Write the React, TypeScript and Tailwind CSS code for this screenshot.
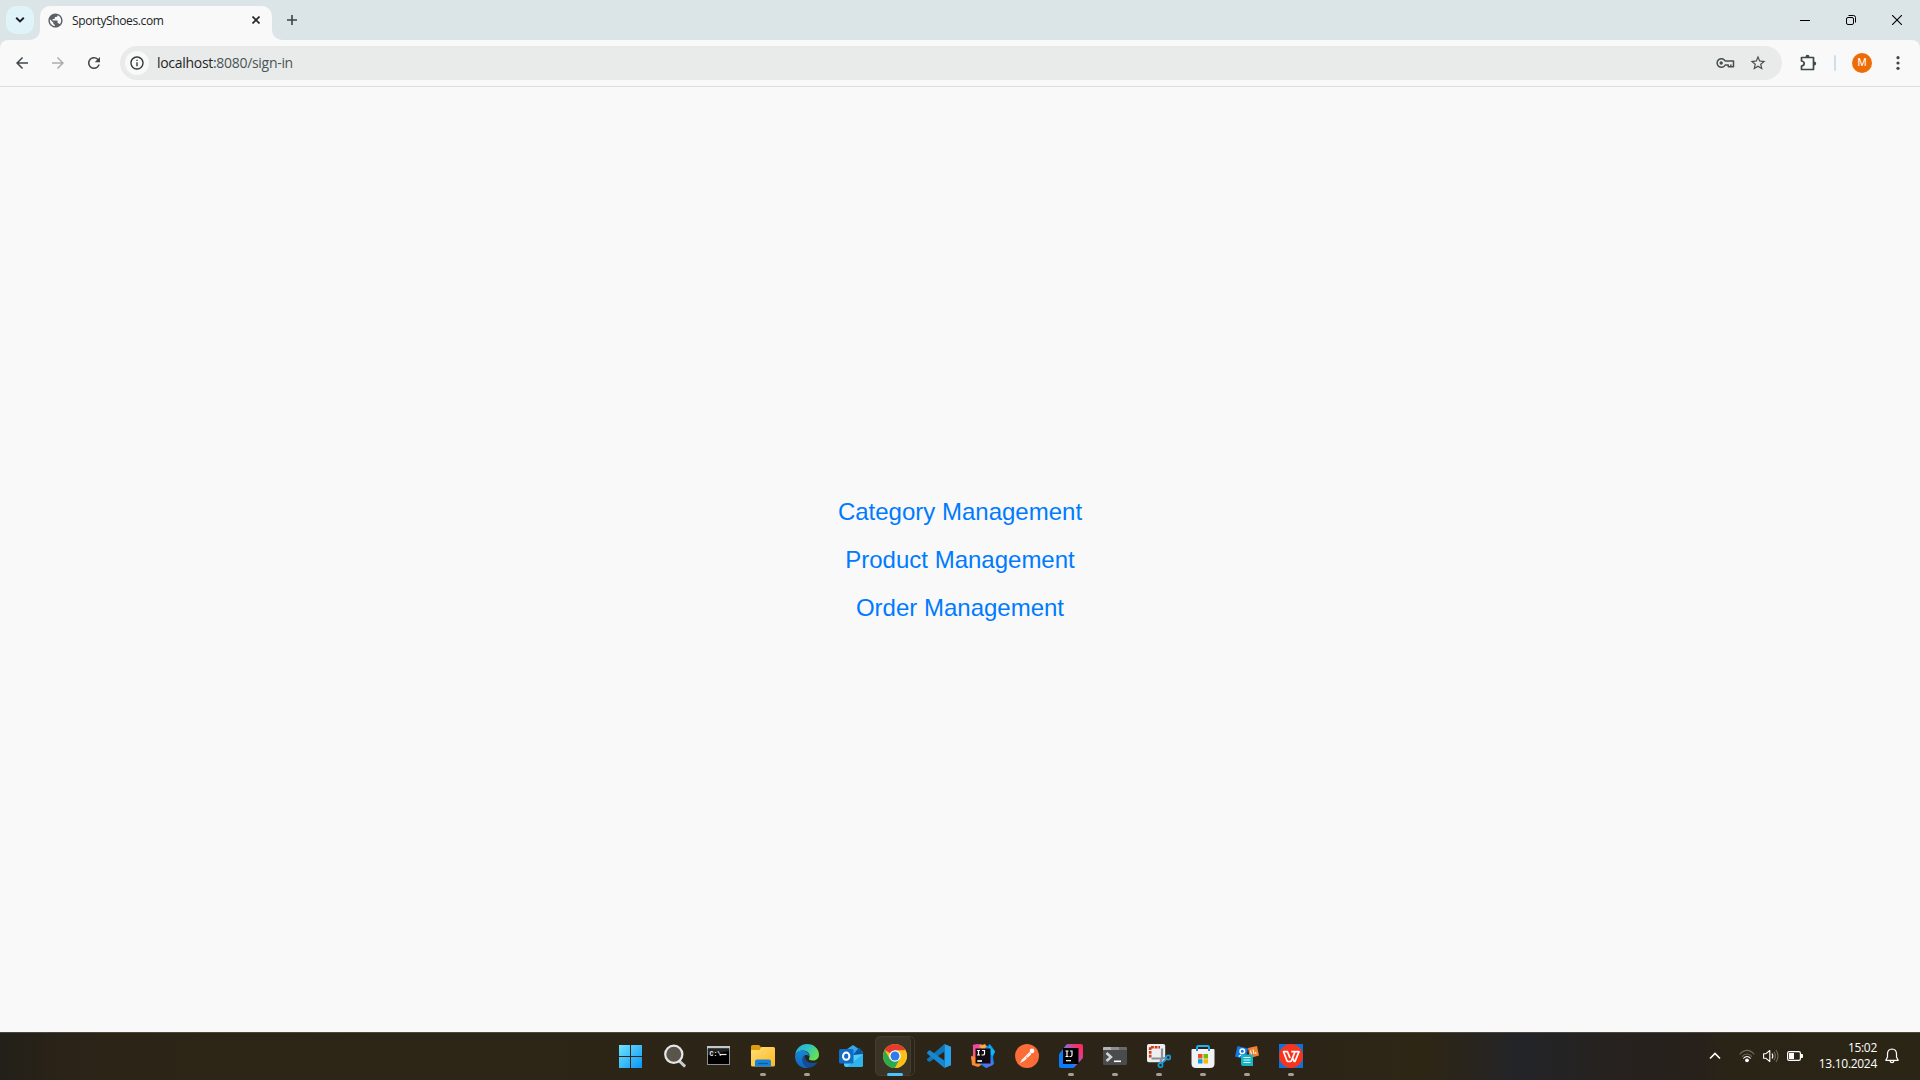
import React from "react";
import {
  MdArrowBack,
  MdArrowForward,
  MdRefresh,
  MdInfoOutline,
  MdStarBorder,
  MdPublic,
  MdKeyboardArrowDown,
} from "react-icons/md";

type Box = { children: React.ReactNode };

const Icon24 = ({ children }: Box) => (
  <svg width="24" height="24" viewBox="0 0 24 24">
    {children}
  </svg>
);

const StartIcon = () => (
  <Icon24>
    <defs>
      <linearGradient id="win" x1="0" y1="0" x2="24" y2="24" gradientUnits="userSpaceOnUse">
        <stop offset="0" stopColor="#6fe6fb" />
        <stop offset="1" stopColor="#0a92f5" />
      </linearGradient>
    </defs>
    <path d="M0 1H11V12H0zM12 1H23V12H12zM0 13H11V24H0zM12 13H23V24H12z" fill="url(#win)" />
  </Icon24>
);

const SearchIcon = () => (
  <Icon24>
    <path d="M16.800 17.500L21.200 21.700" stroke="#c8cccf" strokeWidth="3" strokeLinecap="round" />
    <circle cx="10.800" cy="10.300" r="8.600" fill="#59554a" stroke="#e4e6e8" strokeWidth="2.200" />
  </Icon24>
);

const CmdIcon = () => (
  <Icon24>
    <rect x=".5" y="2.500" width="22" height="18" fill="#000" stroke="#8c9096" />
    <rect x="0" y="2" width="23" height="2.500" fill="#c3c7cc" />
    <path d="M1 11 22 7V4.500H1z" fill="#222" />
    <text x="2.500" y="11.500" fontSize="6.500" fontWeight="700" fill="#eee" fontFamily="Liberation Mono, monospace">C:\</text>
    <path d="M13 10.500h6.500" stroke="#eee" strokeWidth="1.200" />
  </Icon24>
);

const ExplorerIcon = () => (
  <Icon24>
    <defs>
      <linearGradient id="fold" x1="0" y1="0" x2="1" y2="1">
        <stop offset="0" stopColor="#ffdd79" />
        <stop offset="1" stopColor="#fbb921" />
      </linearGradient>
    </defs>
    <path d="M0 2.500Q0 1 1.500 1H8L10.500 3.500H22Q23.500 3.500 24 5V8H0z" fill="#dd9c0b" />
    <path d="M0 6H8.500L10.500 3H22.500Q24 3 24 4.500V21Q24 22.500 22.500 22.500H1.500Q0 22.500 0 21z" fill="url(#fold)" />
    <path d="M4 22.500V17.500Q4 15.500 6 15.500H18Q20 15.500 20 17.500V22.500z" fill="#1683d8" />
    <path d="M7 19.500H17" stroke="#075ca9" strokeWidth="1.200" />
  </Icon24>
);

const EdgeIcon = () => (
  <Icon24>
    <defs>
      <linearGradient id="edgeTop" x1="0" y1="0" x2="1" y2=".5">
        <stop offset="0" stopColor="#2aa8e0" />
        <stop offset=".5" stopColor="#2cc3c8" />
        <stop offset="1" stopColor="#66df52" />
      </linearGradient>
      <linearGradient id="edgeLow" x1="0" y1="0" x2="0" y2="1">
        <stop offset="0" stopColor="#1788d5" />
        <stop offset="1" stopColor="#1065bf" />
      </linearGradient>
    </defs>
    <path d="M.3 10.500C1 4.500 6 0 12 0C19 0 24 5 24 10.500C24 14.500 21 16.500 18 16.500C15 16.500 13.500 15.500 14 14.500C15.500 12.500 14.500 7 9 6.500C5 6.200 1.500 8.500.3 10.500z" fill="url(#edgeTop)" />
    <path d="M.1 12C.3 8.500 4 6 8 6.500C12 7 14 9.500 14 12C11 9.500 7.500 12 7.500 15.500C7.500 19.500 10.500 23.300 14 23.800C6 25.500-.3 19 .1 12z" fill="url(#edgeLow)" />
    <path d="M10 11.300C7 13 7 17.500 9 20.500C11 23.500 14 24 15.500 23.500C19 22.500 21.500 20 22.500 18C18 20 13 19 11 16C9.800 14 9.500 12.500 10 11.300z" fill="#124d96" />
  </Icon24>
);

const OutlookIcon = () => (
  <Icon24>
    <path d="M4.500 7.500L14 1L23.500 7.500V12L14 18L4.500 12z" fill="#36a7e8" />
    <path d="M14 11L20 3.500L23.500 7.500V13L17 17z" fill="#0b57a4" />
    <path d="M5 12L24 10V20.500Q24 23 21.500 23H7.500Q5 23 5 20.500z" fill="#53cdf5" />
    <path d="M24 10L8 22.800Q8.300 23 10 23H21.500Q24 23 24 20.500z" fill="#2eb5ed" />
    <rect x="0" y="5" width="14.500" height="14.500" rx="1.500" fill="#0f6cc7" />
    <ellipse cx="7.200" cy="12.200" rx="3.200" ry="3.600" fill="none" stroke="#fff" strokeWidth="2" />
  </Icon24>
);

const ChromeIcon = () => (
  <Icon24>
    <circle cx="12" cy="12" r="12" fill="#fbc116" />
    <path d="M12 12L1.610 6A12 12 0 0 1 22.390 6z" fill="#e33b2e" />
    <path d="M1.610 6L7.100 15.500L12 12L17 14.500L12 24A12 12 0 0 1 1.610 6z" fill="#2da94f" />
    <path d="M12 6.200H22.490A12 12 0 0 1 12 24L17.200 14.800z" fill="#fbc116" />
    <circle cx="12" cy="12" r="5.800" fill="#fff" />
    <circle cx="12" cy="12" r="4.500" fill="#2f7bea" />
  </Icon24>
);

const VsCodeIcon = () => (
  <Icon24>
    <path d="M17.500 0V7.500L2.500 18L0 16.300V15z" fill="#0f76b8" />
    <path d="M0 8.500L2.500 6L17.500 16.800V24L0 9.500z" fill="#1688d1" />
    <path d="M17.500 0L24 2.800V21.200L17.500 24z" fill="#27a3ee" />
  </Icon24>
);

const IdeaIcon = () => (
  <Icon24>
    <path d="M2 1L10 0L15 4L12 14L8 20L0 15L2 11z" fill="#fc5a74" />
    <path d="M0 12L8 14L12 20L7 23L1 21z" fill="#f98b36" />
    <path d="M1.500 1L7 0L9 3L4 7z" fill="#eb48aa" />
    <path d="M8 2L14 0L17 4L13 8z" fill="#fbad45" />
    <path d="M14 4L19 0L24 7L22 13L23 20L15 24L9 20z" fill="#078ef4" />
    <path d="M18 1L24 8L21 12L18 6z" fill="#10b9f2" />
    <path d="M11 19L20 14L22 21L15 24z" fill="#5771e9" />
    <rect x="4.500" y="4.500" width="15" height="15" fill="#120a12" />
    <path d="M6 6.500H9M7.500 6.500V11M6 11H9M11 6.500H13.500V9.700Q13.500 11 12 11H10.500" fill="none" stroke="#fff" strokeWidth="1.200" />
    <path d="M6.300 17H11" stroke="#fff" strokeWidth="1.600" />
  </Icon24>
);

const PostmanIcon = () => (
  <Icon24>
    <circle cx="12" cy="12" r="12" fill="#fb6c37" />
    <path d="M5 19L7 15.500L14.500 8L16.500 10L9 17z" fill="#fff" />
    <path d="M5 19.500L15 9" stroke="#f7c5ad" strokeWidth=".6" />
    <circle cx="17" cy="6.900" r="2.300" fill="#fff" />
    <path d="M11 13L13.500 15" stroke="#fb6c37" strokeWidth=".7" />
  </Icon24>
);

const IdeaNewIcon = () => (
  <Icon24>
    <defs>
      <linearGradient id="ij" x1="24" y1="2" x2="0" y2="20" gradientUnits="userSpaceOnUse">
        <stop offset="0" stopColor="#fe2857" />
        <stop offset=".2" stopColor="#f03478" />
        <stop offset=".5" stopColor="#8670cc" />
        <stop offset=".7" stopColor="#087cfa" />
        <stop offset="1" stopColor="#087cfa" />
      </linearGradient>
    </defs>
    <path d="M9 0H22Q24 0 24 2V13Q24 14 23 15L15.500 23Q15 24 14 24H2Q0 24 0 22V11Q0 10 1 9L7 1Q8 0 9 0z" fill="url(#ij)" />
    <rect x="4" y="4" width="15.500" height="16" fill="#000" />
    <path d="M6.500 7H9.500M8 7V12.500M6.500 12.500H9.500M11 7H13V11Q13 12.500 11.500 12.500H10.500" fill="none" stroke="#fff" strokeWidth="1.200" />
    <path d="M7 16.700H12" stroke="#fff" strokeWidth="1.200" />
  </Icon24>
);

const TerminalIcon = () => (
  <Icon24>
    <rect x="0" y="3" width="24" height="18" rx="1.200" fill="#4a4b4d" />
    <path d="M0 6V4.200Q0 3 1.200 3H22.800Q24 3 24 4.200V6z" fill="#696a6c" />
    <path d="M0 6V4.200Q0 3 1.200 3H8V6z" fill="#b4b5b6" />
    <path d="M8 3H16V6H8z" fill="#8f9091" />
    <path d="M3.500 9L8 13L3.500 17" fill="none" stroke="#d3d5d7" strokeWidth="2.500" />
    <path d="M11 17.300H18" stroke="#fff" strokeWidth="1.600" />
  </Icon24>
);

const SnipIcon = () => (
  <Icon24>
    <rect x="0" y="0" width="18.200" height="18.200" rx="1.800" fill="#eceef1" />
    <path d="M3.200 13.500V3.200H13" fill="none" stroke="#d13c14" strokeWidth="2.600" strokeDasharray="2.800 .9" />
    <path d="M15 4.500V14.500L13 19M4.500 14.500H15L20 13.500" fill="none" stroke="#8b9197" strokeWidth="2.200" />
    <circle cx="21.300" cy="13.500" r="2.100" fill="none" stroke="#159bd8" strokeWidth="1.700" />
    <circle cx="13.500" cy="21.200" r="2.100" fill="none" stroke="#159bd8" strokeWidth="1.700" />
    <path d="M14.500 19.500L19.500 14.800" stroke="#159bd8" strokeWidth="1.800" />
  </Icon24>
);

const StoreIcon = () => (
  <Icon24>
    <path d="M6 6V3.500Q6 2 7.500 2H16.500Q18 2 18 3.500V6" fill="none" stroke="#22b0f0" strokeWidth="1.900" />
    <path d="M.5 6Q.5 5 1.500 5H22.500Q23.500 5 23.500 6V19.500Q23.500 24 19 24H5Q.5 24 .5 19.500z" fill="#f1f2f3" />
    <path d="M7 10H11.500V14.500H7z" fill="#f04e1f" />
    <path d="M12.500 10H17V14.500H12.500z" fill="#7bb900" />
    <path d="M7 15.200H11.500V19.500H7z" fill="#00a1ef" />
    <path d="M12.500 15.200H17V19.500H12.500z" fill="#fdb700" />
    <path d="M6 5V7M18 5V7" stroke="#1686ce" strokeWidth="1.900" />
  </Icon24>
);

const CardsIcon = () => (
  <Icon24>
    <path d="M2.500 2L13 4.500L10.500 15.500L0 12.500z" fill="#1379e2" />
    <circle cx="7.300" cy="7.300" r="2.300" fill="none" stroke="#fff" strokeWidth="1.500" />
    <path d="M3.800 12.500Q6.500 9.500 9 13" fill="none" stroke="#fff" strokeWidth="1.400" />
    <path d="M13 4L22 2L24 11.500L15 14z" fill="#f08132" />
    <path d="M15.500 6.500L16.500 10.500M18 5.500L19 10M20.500 8L21 10" stroke="#fff" strokeWidth="1" />
    <path d="M6 10.500H18V22H8Q6 22 6 20z" fill="#18b4c6" />
    <path d="M8.500 13.500H15.500M8.500 16H15.500M8.500 18.500H15.500" stroke="#d7fbff" strokeWidth="1.200" />
  </Icon24>
);

const WpsIcon = () => (
  <Icon24>
    <rect width="24" height="24" fill="#0a74dc" />
    <circle cx="12" cy="12" r="11.900" fill="#f8341f" />
    <path d="M12.300 7.700H16L12.500 16.500Q12 17.500 11.300 17.500H9Q8.300 17.500 8 16.700L4.500 7.700H8.500L11 14M14 14.500L15 17.300H16L20 7.700H16.500" fill="none" stroke="#fff" strokeWidth="1.700" strokeLinejoin="round" />
  </Icon24>
);

const apps: { icon: React.ReactNode; running?: boolean; active?: boolean }[] = [
  { icon: <StartIcon /> },
  { icon: <SearchIcon /> },
  { icon: <CmdIcon /> },
  { icon: <ExplorerIcon />, running: true },
  { icon: <EdgeIcon />, running: true },
  { icon: <OutlookIcon /> },
  { icon: <ChromeIcon />, active: true },
  { icon: <VsCodeIcon /> },
  { icon: <IdeaIcon /> },
  { icon: <PostmanIcon /> },
  { icon: <IdeaNewIcon />, running: true },
  { icon: <TerminalIcon />, running: true },
  { icon: <SnipIcon />, running: true },
  { icon: <StoreIcon />, running: true },
  { icon: <CardsIcon />, running: true },
  { icon: <WpsIcon />, running: true },
];

const TabStrip = () => (
  <header className="flex h-10 items-start bg-[#dbe4e7]">
    <button className="ml-1.5 mt-1.5 flex size-7 items-center justify-center rounded-[10px] bg-[#e0f3f8] text-[#1c1f20]">
      <svg width="10" height="6" viewBox="0 0 10 6">
        <path d="M1.200.8 5 4.500 8.800.8" fill="none" stroke="#1c1f20" strokeWidth="1.900" />
      </svg>
    </button>
    <svg className="mt-[30px] ml-[-4px]" width="10" height="10" viewBox="0 0 10 10">
      <path d="M10 0V10H0A10 10 0 0 0 10 0z" fill="#f9f9f9" />
    </svg>
    <div className="mt-1.5 flex h-[34px] w-[232px] items-center rounded-t-[10px] bg-[#f9f9f9] pb-1.5">
      <MdPublic className="ml-[7px] text-[#5b5f66]" size={17} />
      <span className="ml-2 pt-0.5 text-[12px] leading-4 tracking-[-0.38px] text-[#202426]">SportyShoes.com</span>
      <svg className="ml-auto mr-3" width="8" height="8" viewBox="0 0 8 8">
        <path d="M.5.5 7.500 7.500M7.500.5.5 7.500" stroke="#26292b" strokeWidth="1.700" />
      </svg>
    </div>
    <svg className="mt-[30px]" width="10" height="10" viewBox="0 0 10 10">
      <path d="M0 0V10H10A10 10 0 0 1 0 0z" fill="#f9f9f9" />
    </svg>
    <svg className="mt-[15px] ml-[5px]" width="10" height="10" viewBox="0 0 10 10">
      <path d="M5 0V10M0 5H10" stroke="#3c4346" strokeWidth="1.600" />
    </svg>
    <div className="ml-auto flex h-10 items-center text-black">
      <div className="flex w-[46px] justify-center">
        <svg width="10" height="10" viewBox="0 0 10 10">
          <path d="M0 5.500H10" stroke="#000" />
        </svg>
      </div>
      <div className="flex w-[46px] justify-center">
        <svg width="10" height="10" viewBox="0 0 10 10" fill="none" stroke="#000">
          <rect x=".5" y="2.500" width="7" height="7" rx="1.500" />
          <path d="M2.500.5H7.500Q9.500.5 9.500 2.500V7.500" />
        </svg>
      </div>
      <div className="flex w-[46px] justify-center">
        <svg width="10" height="10" viewBox="0 0 10 10">
          <path d="M0 0 10 10M10 0 0 10" stroke="#000" strokeWidth="1.100" />
        </svg>
      </div>
    </div>
  </header>
);

const KeyIcon = () => (
  <svg className="ml-auto" width="19" height="12" viewBox="0 0 19 12" fill="none" stroke="#474e51" strokeWidth="1.500">
    <path d="M9.200 4A4.300 4.300 0 1 0 9.200 8H12.300V9.800H17.500V4z" strokeLinejoin="round" />
    <circle cx="5.200" cy="6" r="1.700" fill="#474e51" stroke="none" />
    <path d="M14.900 9.500V7.500" />
  </svg>
);

const Toolbar = () => (
  <div className="bg-[#dbe4e7]">
    <div className="flex h-[47px] items-center rounded-t-lg border-b border-[#dcdfe0] bg-[#f9f9f9] pl-1 pr-1">
      <div className="flex w-9 justify-center text-[#40484b]">
        <MdArrowBack size={18} />
      </div>
      <div className="flex w-9 justify-center text-[#a9aeb0]">
        <MdArrowForward size={18} />
      </div>
      <div className="flex w-9 justify-center text-[#40484b]">
        <MdRefresh size={18} />
      </div>
      <div className="ml-2 flex h-[34px] w-[1662px] items-center rounded-full bg-[#e8ebea] pl-[5px]">
        <div className="flex size-6 items-center justify-center rounded-full bg-[#f9f9f9] text-[#2c3133]">
          <MdInfoOutline size={16} />
        </div>
        <span className="ml-2 text-[14px] leading-5 tracking-[-0.3px] text-[#4b5458]">
          <span className="text-[#1f2426]">localhost</span>:8080/sign-in
        </span>
        <KeyIcon />
        <MdStarBorder className="ml-3.5 mr-[15px] text-[#474e51]" size={18} />
      </div>
      <div className="ml-2 flex w-9 justify-center pl-px">
        <svg width="17" height="18" viewBox="0 0 17 18">
          <path
            d="M1.500 3.500H13.500V15.500H1.500V12Q4.200 11.500 4.200 9.500T1.500 7z"
            fill="none"
            stroke="#3f484b"
            strokeWidth="1.700"
            strokeLinejoin="round"
          />
          <path d="M5.500 3Q5.500.8 7.500.8T9.500 3zM14 7.500Q16.200 7.500 16.200 9.500T14 11.500z" fill="#3f484b" />
        </svg>
      </div>
      <div className="ml-2 h-4 w-0.5 rounded bg-[#cde0e8]" />
      <div className="ml-2 flex w-9 justify-center">
        <div className="flex size-5 items-center justify-center rounded-full bg-[#ee6c05] font-[Roboto,sans-serif] text-[10.5px] leading-none text-white">M</div>
      </div>
      <div className="flex w-9 justify-center">
        <svg width="4" height="14" viewBox="0 0 4 14" fill="#3f484b">
          <circle cx="2" cy="1.700" r="1.600" />
          <circle cx="2" cy="7" r="1.600" />
          <circle cx="2" cy="12.300" r="1.600" />
        </svg>
      </div>
    </div>
  </div>
);

const Tray = () => (
  <div className="flex h-[46px] items-center justify-end pr-[21px]">
    <svg className="mr-[18px]" width="12" height="8" viewBox="0 0 12 8">
      <path d="M1 6.500 6 1.500 11 6.500" fill="none" stroke="#fff" strokeWidth="1.700" />
    </svg>
    <svg className="mr-2" width="16" height="14" viewBox="0 0 16 14" fill="none" strokeWidth="1.100">
      <path d="M.7 5.300Q8-2.500 15.300 5.300M3 7.600Q8 2.300 13 7.600" stroke="#706b5f" />
      <path d="M4.300 9.500Q8 5.500 11.700 9.500" stroke="#fff" />
      <circle cx="8" cy="11.300" r="1.900" fill="#fff" />
    </svg>
    <svg className="mr-2" width="16" height="14" viewBox="0 0 16 14" fill="none" strokeWidth="1.100">
      <path d="M.6 4.700H3L6.800 1.500V12.500L3 9.300H.6z" stroke="#fff" strokeLinejoin="round" />
      <path d="M9 4.500Q10.700 7 9 9.500" stroke="#fff" />
      <path d="M11 2.800Q13.700 7 11 11.200M13 1Q17 7 13 13" stroke="#706b5f" />
    </svg>
    <svg width="16" height="12" viewBox="0 0 16 12">
      <rect x=".6" y="1.600" width="12.800" height="8.800" rx="1.600" fill="none" stroke="#fff" strokeWidth="1.200" />
      <rect x="2" y="3" width="5" height="6" fill="#fff" />
      <path d="M14 4h1.200q.8 0 .8 1v2q0 1-.8 1H14z" fill="#fff" />
    </svg>
    <div className="flex w-[74px] flex-col items-end text-right text-[12px] leading-4 tracking-[-0.3px] text-white">
      <span>15:02</span>
      <span>13.10.2024</span>
    </div>
    <svg className="ml-2" width="14" height="16" viewBox="0 0 14 16" fill="none" stroke="#fff" strokeWidth="1.200">
      <path d="M7 1Q2.500 1.200 2.500 6V9L.8 12.300H13.200L11.500 9V6Q11.500 1.200 7 1z" strokeLinejoin="round" />
      <path d="M5 12.700Q5.300 14.700 7 14.700T9 12.700" />
    </svg>
  </div>
);

const Taskbar = () => (
  <footer className="grid h-12 grid-cols-[609px_704px_607px] border-t border-[#4b473e] bg-[linear-gradient(90deg,#222019_0px,#2b2317_70px,#2d2516_200px,#2c2517_1300px,#2e2615_1425px,#222428_1520px,#262220_1600px,#28211b_1700px,#2a2416_1730px,#2b2516_1920px)]">
    <div />
    <div className="flex h-[47px]">
      {apps.map((app, i) => (
        <div key={i} className="relative flex w-11 items-center justify-center pb-px">
          {app.active && (
            <>
              <div className="absolute left-[5px] top-[3px] h-10 w-[37px] rounded-[5px] border border-[#413b2e]" />
              <div className="absolute left-[2px] top-[3px] h-10 w-9 rounded-[5px] border border-[#443e31] bg-[#3a3427]" />
            </>
          )}
          <div className="relative">{app.icon}</div>
          {app.running && <div className="absolute bottom-1 left-[19px] h-[3px] w-1.5 rounded-full bg-[#a29f98]" />}
          {app.active && <div className="absolute bottom-1 left-3.5 h-[3px] w-4 rounded-full bg-[#4cc2ff]" />}
        </div>
      ))}
    </div>
    <Tray />
  </footer>
);

const links = ["Category Management", "Product Management", "Order Management"];

export default function App() {
  return (
    <div className="flex h-screen w-full flex-col overflow-hidden bg-[#f9f9f9] font-['Open_Sans','Noto_Sans',sans-serif]">
      <TabStrip />
      <Toolbar />
      <main className="flex flex-1 flex-col items-center justify-center gap-5 font-['Liberation_Sans',Arial,sans-serif] text-2xl leading-7 text-[#007bff]">
        {links.map((label) => (
          <a key={label} href="#">
            {label}
          </a>
        ))}
      </main>
      <Taskbar />
    </div>
  );
}
